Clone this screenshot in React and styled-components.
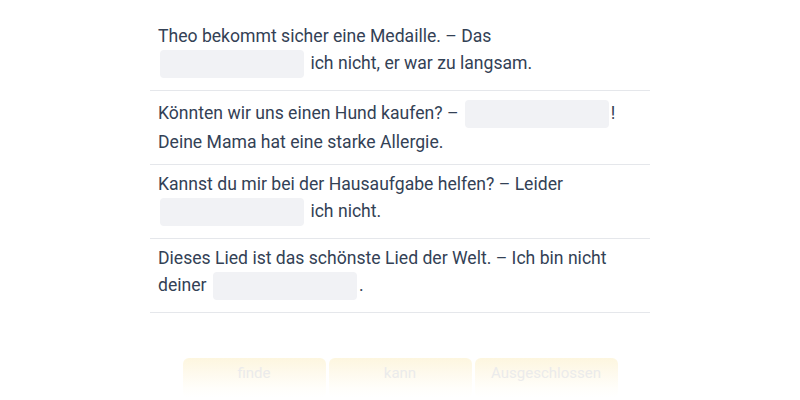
import React from 'react';
import styled, { createGlobalStyle } from 'styled-components';

const GlobalStyle = createGlobalStyle`
  body {
    margin: 0;
    background: #ffffff;
    font-family: Roboto, "Liberation Sans", sans-serif;
  }
`;

const Page = styled.div`
  width: 500px;
  margin: 0 auto;
  padding-top: 17px;
`;

const List = styled.div`
  display: flex;
  flex-direction: column;
`;

const Row = styled.div`
  padding: 7px 8px 10px 8px;
  border-bottom: 1px solid #e5e7eb;
  font-size: 17.6px;
  line-height: 24px;
  color: #334155;
`;

const Blank = styled.span`
  display: inline-block;
  width: 144px;
  height: 28px;
  margin: 2px 2px;
  vertical-align: -11px;
  background: #f1f2f5;
  border-radius: 4px;
`;

const Choices = styled.div`
  display: flex;
  justify-content: center;
  gap: 3px;
  margin-top: 45px;
`;

const Choice = styled.div`
  width: 143px;
  height: 40px;
  padding-top: 3px;
  box-sizing: border-box;
  display: flex;
  justify-content: center;
  border-radius: 6px;
  background: linear-gradient(180deg, #fdf6df 0%, #fefaee 40%, #fffefa 75%, #ffffff 100%);
  color: #ebebeb;
  font-size: 15px;
  line-height: 24px;
`;

const items = [
  { before: 'Theo bekommt sicher eine Medaille. – Das', after: 'ich nicht, er war zu langsam.' },
  { before: 'Könnten wir uns einen Hund kaufen? –', after: '! Deine Mama hat eine starke Allergie.', tight: true },
  { before: 'Kannst du mir bei der Hausaufgabe helfen? – Leider', after: 'ich nicht.' },
  { before: 'Dieses Lied ist das schönste Lied der Welt. – Ich bin nicht deiner', after: '.', tight: true },
];

const words = ['finde', 'kann', 'Ausgeschlossen'];

export default function App() {
  return (
    <>
      <GlobalStyle />
      <Page>
        <List>
          {items.map((item) => (
            <Row key={item.before}>
              {item.before} <Blank />{item.tight ? '' : ' '}{item.after}
            </Row>
          ))}
        </List>
        <Choices>
          {words.map((w) => (
            <Choice key={w}>{w}</Choice>
          ))}
        </Choices>
      </Page>
    </>
  );
}
